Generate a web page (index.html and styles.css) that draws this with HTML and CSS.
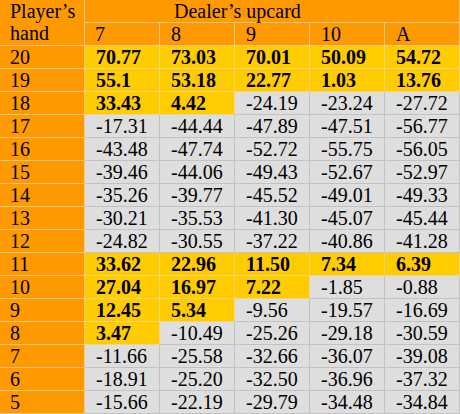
FILE: index.html
```html
<!DOCTYPE html>
<html>
<head>
<meta charset="utf-8">
<link rel="stylesheet" href="styles.css">
</head>
<body>
<table class="odds">
  <colgroup>
    <col class="c-hand"><col class="c-up"><col class="c-up"><col class="c-up"><col class="c-up"><col class="c-up">
  </colgroup>
  <tr>
    <td class="hd hand" rowspan="2">Player’s<br>hand</td>
    <td class="hd dealer" colspan="5">Dealer’s upcard</td>
  </tr>
  <tr>
    <td class="hd">7</td><td class="hd">8</td><td class="hd">9</td><td class="hd">10</td><td class="hd">A</td>
  </tr>
  <tr><td class="hd">20</td><td class="pos">70.77</td><td class="pos">73.03</td><td class="pos">70.01</td><td class="pos">50.09</td><td class="pos">54.72</td></tr>
  <tr><td class="hd">19</td><td class="pos">55.1</td><td class="pos">53.18</td><td class="pos">22.77</td><td class="pos">1.03</td><td class="pos">13.76</td></tr>
  <tr><td class="hd">18</td><td class="pos">33.43</td><td class="pos">4.42</td><td class="neg">-24.19</td><td class="neg">-23.24</td><td class="neg">-27.72</td></tr>
  <tr><td class="hd">17</td><td class="neg">-17.31</td><td class="neg">-44.44</td><td class="neg">-47.89</td><td class="neg">-47.51</td><td class="neg">-56.77</td></tr>
  <tr><td class="hd">16</td><td class="neg">-43.48</td><td class="neg">-47.74</td><td class="neg">-52.72</td><td class="neg">-55.75</td><td class="neg">-56.05</td></tr>
  <tr><td class="hd">15</td><td class="neg">-39.46</td><td class="neg">-44.06</td><td class="neg">-49.43</td><td class="neg">-52.67</td><td class="neg">-52.97</td></tr>
  <tr><td class="hd">14</td><td class="neg">-35.26</td><td class="neg">-39.77</td><td class="neg">-45.52</td><td class="neg">-49.01</td><td class="neg">-49.33</td></tr>
  <tr><td class="hd">13</td><td class="neg">-30.21</td><td class="neg">-35.53</td><td class="neg">-41.30</td><td class="neg">-45.07</td><td class="neg">-45.44</td></tr>
  <tr><td class="hd">12</td><td class="neg">-24.82</td><td class="neg">-30.55</td><td class="neg">-37.22</td><td class="neg">-40.86</td><td class="neg">-41.28</td></tr>
  <tr><td class="hd">11</td><td class="pos">33.62</td><td class="pos">22.96</td><td class="pos">11.50</td><td class="pos">7.34</td><td class="pos">6.39</td></tr>
  <tr><td class="hd">10</td><td class="pos">27.04</td><td class="pos">16.97</td><td class="pos">7.22</td><td class="neg">-1.85</td><td class="neg">-0.88</td></tr>
  <tr><td class="hd">9</td><td class="pos">12.45</td><td class="pos">5.34</td><td class="neg">-9.56</td><td class="neg">-19.57</td><td class="neg">-16.69</td></tr>
  <tr><td class="hd">8</td><td class="pos">3.47</td><td class="neg">-10.49</td><td class="neg">-25.26</td><td class="neg">-29.18</td><td class="neg">-30.59</td></tr>
  <tr><td class="hd">7</td><td class="neg">-11.66</td><td class="neg">-25.58</td><td class="neg">-32.66</td><td class="neg">-36.07</td><td class="neg">-39.08</td></tr>
  <tr><td class="hd">6</td><td class="neg">-18.91</td><td class="neg">-25.20</td><td class="neg">-32.50</td><td class="neg">-36.96</td><td class="neg">-37.32</td></tr>
  <tr><td class="hd">5</td><td class="neg">-15.66</td><td class="neg">-22.19</td><td class="neg">-29.79</td><td class="neg">-34.48</td><td class="neg">-34.84</td></tr>
</table>
</body>
</html>
```
FILE: styles.css
```css
html, body {
  margin: 0;
  padding: 0;
  overflow: hidden;
  background: #ffffff;
}
.odds {
  width: 460px;
  table-layout: fixed;
  border-collapse: separate;
  border-spacing: 0;
  font-family: "Liberation Serif", "Times New Roman", serif;
  font-size: 20px;
  color: #000;
}
.c-hand { width: 85px; }
.c-up { width: 75px; }
.odds td {
  padding: 0 0 0 11px;
  line-height: 22px;
  border-right: 1px solid #bfbfbf;
  border-bottom: 1px solid #bfbfbf;
  white-space: nowrap;
  vertical-align: middle;
}
.odds td.hd {
  background: #ff9900;
  border-color: #f6c486;
}
.odds td.hand {
  vertical-align: top;
  padding-left: 10px;
}
.odds tr > td.hd:first-child {
  padding-left: 10px;
}
.odds tr > td.dealer {
  padding-left: 89px;
}
.odds td.pos {
  background: #ffcc00;
  border-color: #f3d57a;
  font-weight: bold;
}
.odds td.neg {
  background: #dedede;
  border-color: #c2c2c2;
}
```
